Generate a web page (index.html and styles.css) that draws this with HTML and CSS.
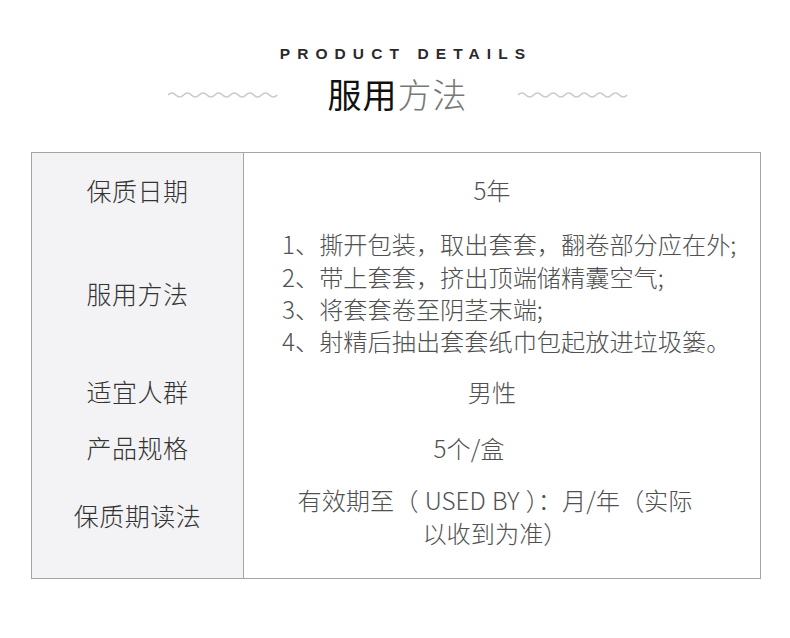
FILE: index.html
```html
<!DOCTYPE html>
<html lang="zh">
<head>
<meta charset="utf-8">
<link rel="stylesheet" href="styles.css">
</head>
<body>
<header class="head">
  <div class="en">PRODUCT DETAILS</div>
  <div class="title-row">
    <svg class="wave" width="110" height="8" viewBox="0 0 110 8"><path d="M0 4 Q3.9 0 7.8 4 T15.6 4 T23.4 4 T31.2 4 T39 4 T46.8 4 T54.6 4 T62.4 4 T70.2 4 T78 4 T85.8 4 T93.6 4 T101.4 4 T109.2 4" fill="none" stroke="#cbcbcb" stroke-width="1.7"/></svg>
    <h1 class="cn"><span class="dark">服用</span><span class="light">方法</span></h1>
    <svg class="wave" width="110" height="8" viewBox="0 0 110 8"><path d="M0 4 Q3.9 0 7.8 4 T15.6 4 T23.4 4 T31.2 4 T39 4 T46.8 4 T54.6 4 T62.4 4 T70.2 4 T78 4 T85.8 4 T93.6 4 T101.4 4 T109.2 4" fill="none" stroke="#cbcbcb" stroke-width="1.7"/></svg>
  </div>
</header>
<section class="table">
  <div class="label r1">保质日期</div>
  <div class="value r1"><span class="shift-l">5年</span></div>
  <div class="label r2">服用方法</div>
  <div class="value r2">
    <ol class="steps">
      <li>1、撕开包装，取出套套，翻卷部分应在外;</li>
      <li>2、带上套套，挤出顶端储精囊空气;</li>
      <li>3、将套套卷至阴茎末端;</li>
      <li>4、射精后抽出套套纸巾包起放进垃圾篓。</li>
    </ol>
  </div>
  <div class="label r3">适宜人群</div>
  <div class="value r3"><span class="shift-l">男性</span></div>
  <div class="label r4">产品规格</div>
  <div class="value r4"><span class="shift-box">5个/盒</span></div>
  <div class="label r5">保质期读法</div>
  <div class="value r5">
    <div class="read">
      <div class="read-line">有效期至（ USED BY ）：月/年（实际</div>
      <div class="read-line">以收到为准）</div>
    </div>
  </div>
</section>
</body>
</html>
```
FILE: styles.css
```css
* { box-sizing: border-box; }
html, body { margin: 0; padding: 0; background: #fff; }
body {
  width: 790px;
  height: 638px;
  font-family: "Noto Sans CJK SC", "Noto Sans", sans-serif;
  overflow: hidden;
}
.head {
  padding-top: 44px;
  display: flex;
  flex-direction: column;
  align-items: center;
}
.en {
  font-family: "Liberation Sans", Arial, sans-serif;
  font-weight: bold;
  font-size: 15.5px;
  letter-spacing: 7.1px;
  color: #2a2a2a;
  line-height: 20px;
  margin-left: 22px;
}
.title-row {
  display: flex;
  align-items: center;
  gap: 50px;
  margin-top: 9px;
  margin-left: 5px;
}
.wave { display: block; margin-top: 2px; }
.cn {
  margin: 0;
  font-size: 34px;
  font-weight: normal;
  line-height: 42px;
  letter-spacing: 1px;
}
.cn .dark { color: #111; }
.cn .light { color: #777; font-weight: 300; }

.table {
  margin: 37px 0 0 31px;
  width: 730px;
  height: 427px;
  border: 1px solid #a5a5a5;
  display: grid;
  grid-template-columns: 212px 1fr;
  grid-template-rows: 78px 130px 66px 48px 1fr;
}
.label {
  background: #f3f3f5;
  border-right: 1px solid #a5a5a5;
  display: flex;
  align-items: center;
  justify-content: center;
  font-size: 25px;
  color: #333;
  font-weight: 300;
  letter-spacing: 0.5px;
  padding-bottom: 6px;
}
.value {
  display: flex;
  align-items: center;
  justify-content: center;
  font-size: 24.2px;
  color: #505050;
  font-weight: 300;
  padding-bottom: 6px;
}
.label.r1, .value.r1 { padding-bottom: 5px; }
.label.r4, .value.r4 { padding-bottom: 8px; }
.label.r5 { padding-bottom: 24px; }
.value.r5 { padding-bottom: 20px; }
.shift-l { margin-left: -20px; }
.shift-box { margin-left: -66px; }
.steps {
  list-style: none;
  margin: 0;
  padding: 0 0 0 38px;
  line-height: 32.4px;
  width: 100%;
  white-space: nowrap;
}
.read {
  text-align: center;
  margin-left: -14px;
  word-spacing: 1px;
}
.read-line {
  line-height: 32.4px;
  height: 32.4px;
  white-space: nowrap;
}
```
